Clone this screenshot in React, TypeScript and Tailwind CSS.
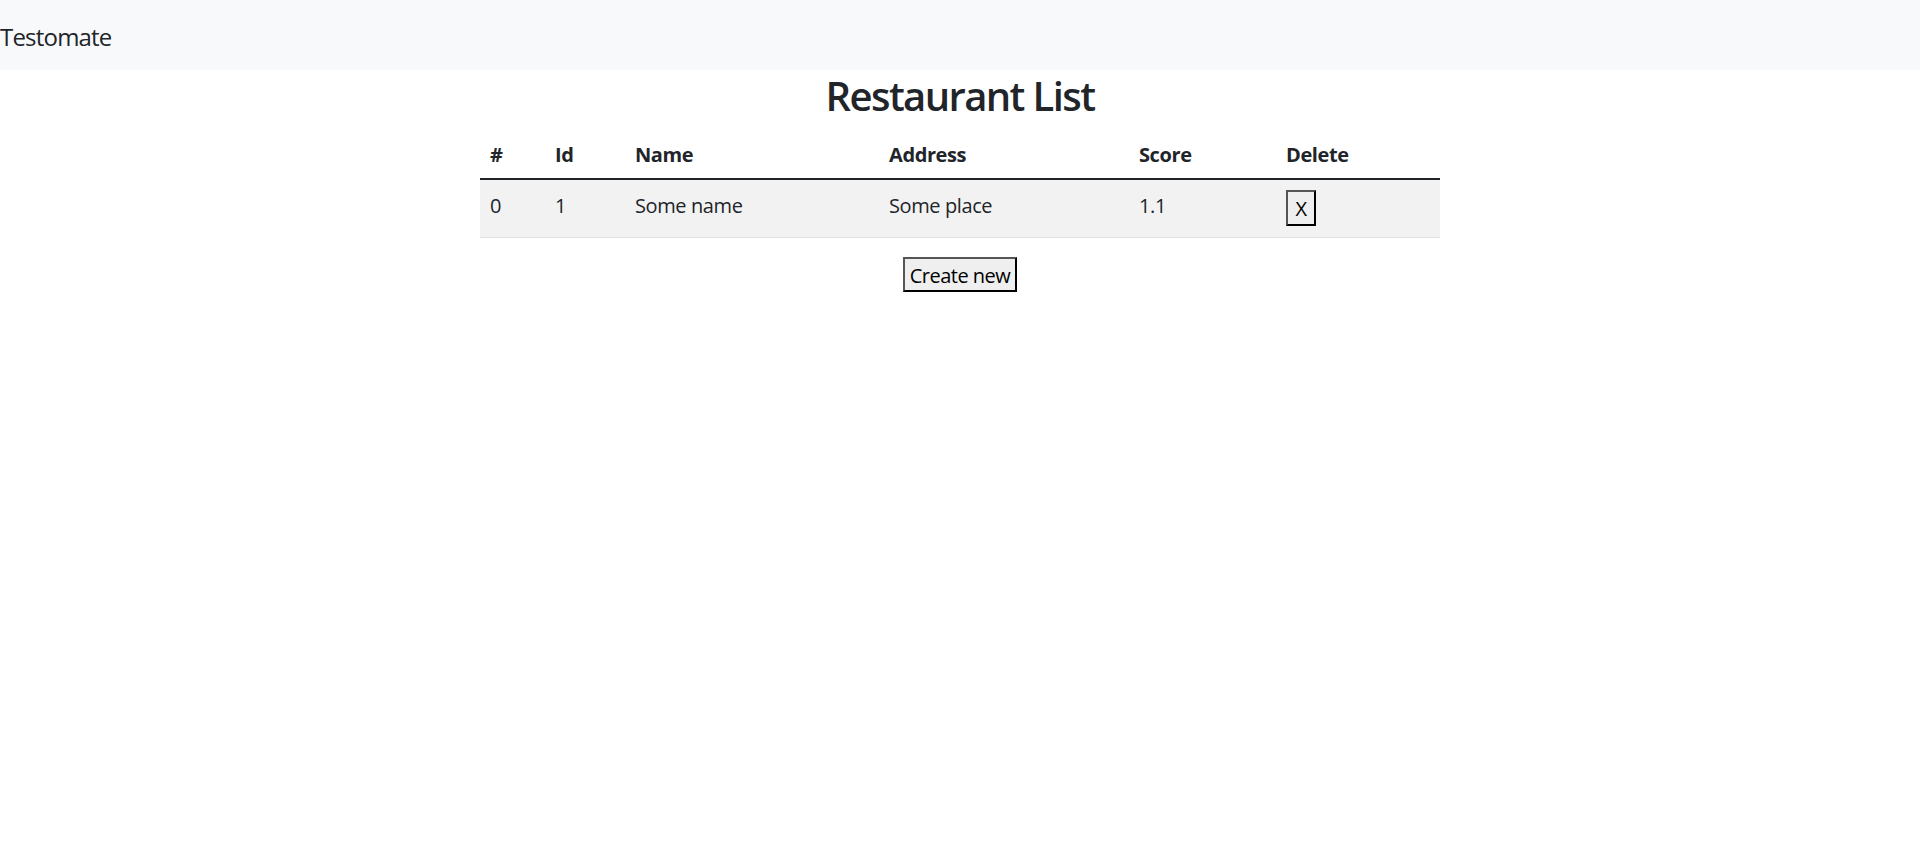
import React from "react";

const font = { fontFamily: '"Open Sans", "Noto Sans", "Liberation Sans", sans-serif' };

export default function App() {
  return (
    <div className="min-h-[868px] bg-white text-[#212529]" style={font}>
      <nav className="h-[70px] bg-[#f8f9fa] flex items-center">
        <span className="text-[24px] leading-[37px] pt-[3px] text-[#212529] tracking-[-0.8px]">Testomate</span>
      </nav>
      <div className="w-[960px] mx-auto">
        <h1 className="text-[40px] leading-[48px] font-semibold text-center mt-[2px] mb-[8px] tracking-[-1.6px]">Restaurant List</h1>
        <table className="w-[960px] table-fixed border-collapse text-[20px] leading-[30px] tracking-[-0.4px]">
          <colgroup>
            <col className="w-[65px]" />
            <col className="w-[80px]" />
            <col className="w-[254px]" />
            <col className="w-[250px]" />
            <col className="w-[147px]" />
            <col className="w-[164px]" />
          </colgroup>
          <thead>
            <tr className="border-b-2 border-[#212529]">
              <th className="text-left font-bold px-[10px] pt-[12px] pb-[8px]">#</th>
              <th className="text-left font-bold px-[10px] pt-[12px] pb-[8px]">Id</th>
              <th className="text-left font-bold px-[10px] pt-[12px] pb-[8px]">Name</th>
              <th className="text-left font-bold px-[10px] pt-[12px] pb-[8px]">Address</th>
              <th className="text-left font-bold px-[10px] pt-[12px] pb-[8px]">Score</th>
              <th className="text-left font-bold px-[10px] pt-[12px] pb-[8px]">Delete</th>
            </tr>
          </thead>
          <tbody>
            <tr className="bg-[#f2f2f2] border-b border-[#dee2e6] text-[#212529]">
              <td className="px-[10px] pt-[11px] pb-[11px] align-top">0</td>
              <td className="px-[10px] pt-[11px] pb-[11px] align-top">1</td>
              <td className="px-[10px] pt-[11px] pb-[11px] align-top">Some name</td>
              <td className="px-[10px] pt-[11px] pb-[11px] align-top">Some place</td>
              <td className="px-[10px] pt-[11px] pb-[11px] align-top">1.1</td>
              <td className="px-[10px] pt-[10px] pb-[11px] align-top">
                <button className="w-[30px] h-[36px] bg-[#efefef] border-2 border-solid border-[#555] border-r-black border-b-black text-[20px] leading-[30px] pt-[2px] text-black flex items-center justify-center">
                  X
                </button>
              </td>
            </tr>
          </tbody>
        </table>
        <div className="flex justify-center mt-[19px]">
          <button className="w-[114px] h-[35px] bg-[#efefef] border-2 border-solid border-[#555] border-r-black border-b-black text-[20px] leading-[28px] pt-[2px] text-black flex items-center justify-center tracking-[-0.5px]">
            Create new
          </button>
        </div>
      </div>
    </div>
  );
}
